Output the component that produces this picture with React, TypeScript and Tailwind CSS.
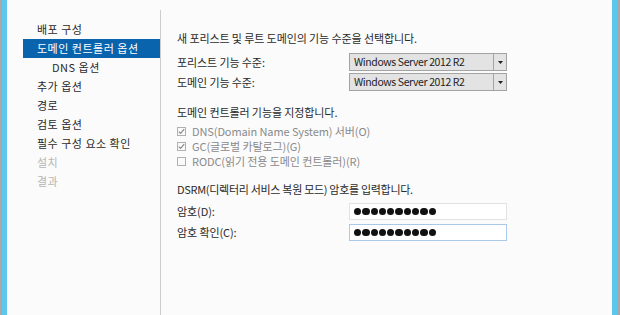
const navItems = [
  { label: "배포 구성" },
  { label: "도메인 컨트롤러 옵션", selected: true },
  { label: "DNS 옵션", sub: true },
  { label: "추가 옵션" },
  { label: "경로" },
  { label: "검토 옵션" },
  { label: "필수 구성 요소 확인" },
  { label: "설치", disabled: true },
  { label: "결과", disabled: true },
];

function Select({ value }: { value: string }) {
  return (
    <div className="w-[158px] h-[18px] flex bg-[#e3e3e3] border border-[#a3a3a3]">
      <div className="flex-1 flex items-center pl-[4px] text-[10.5px] tracking-[-0.4px] text-[#1e1e1e]">{value}</div>
      <div className="w-[13px] border-l border-[#a3a3a3] flex items-center justify-center">
        <svg width="5" height="3" viewBox="0 0 5 3">
          <path d="M0 0h5L2.5 3z" fill="#222" />
        </svg>
      </div>
    </div>
  );
}

function Password({ focused }: { focused?: boolean }) {
  return (
    <div
      className={
        "w-[158px] h-[17px] flex items-center gap-[1px] pl-[4px] bg-white border " +
        (focused ? "border-[#a9c9e8]" : "border-[#e2e2e2]")
      }
    >
      {Array.from({ length: 10 }).map((_, i) => (
        <span key={i} className="w-[7.3px] h-[7.3px] rounded-full bg-[#111]" />
      ))}
    </div>
  );
}

function Check({ label, checked }: { label: string; checked?: boolean }) {
  return (
    <div className="h-[15px] flex items-center gap-[6px] text-[#8a8a8a]">
      <div className="w-[9px] h-[9px] border border-[#b0b0b0] bg-[#fafafa] flex items-center justify-center">
        {checked && (
          <svg width="7" height="7" viewBox="0 0 7 7">
            <path d="M0.8 3.6l1.8 1.8L6.2 1.2" fill="none" stroke="#8a8a8a" strokeWidth="1.2" />
          </svg>
        )}
      </div>
      <span>{label}</span>
    </div>
  );
}

export default function App() {
  return (
    <div
      className="w-[620px] h-[315px] flex bg-[#fbfbfb] overflow-hidden text-[11px] tracking-[-0.1px] text-[#2a2a2a]"
      style={{ fontFamily: '"Noto Sans CJK KR", "Noto Sans", sans-serif' }}
    >
      <div className="w-[2px] bg-[#a8a8a8]" />
      <div className="w-[5px] bg-[#5cc6ee]" />

      <div className="w-[154px] shrink-0 pt-[10px]">
        <div className="h-full border-r border-[#cdcdcd] pt-[10px] pl-[16px]">
          {navItems.map((it) => (
            <div
              key={it.label}
              className={
                "h-[19px] flex items-center tracking-[0.5px] " +
                (it.sub ? "pl-[29px] " : "pl-[14px] ") +
                (it.selected ? "bg-[#0a64ad] text-white" : it.disabled ? "text-[#b5b5b5]" : "text-[#2a2a2a]")
              }
            >
              {it.label}
            </div>
          ))}
        </div>
      </div>

      <div className="flex-1 pl-[16px] pt-[30px] flex flex-col">
        <div className="h-[16px] flex items-center">새 포리스트 및 루트 도메인의 기능 수준을 선택합니다.</div>
        <div className="mt-[7px] flex items-center">
          <div className="w-[172px] shrink-0">포리스트 기능 수준:</div>
          <Select value="Windows Server 2012 R2" />
        </div>
        <div className="mt-[2px] flex items-center">
          <div className="w-[172px] shrink-0">도메인 기능 수준:</div>
          <Select value="Windows Server 2012 R2" />
        </div>

        <div className="mt-[13px] h-[16px] flex items-center">도메인 컨트롤러 기능을 지정합니다.</div>
        <div className="mt-[4px]">
          <Check label="DNS(Domain Name System) 서버(O)" checked />
          <Check label="GC(글로벌 카탈로그)(G)" checked />
          <Check label="RODC(읽기 전용 도메인 컨트롤러)(R)" />
        </div>

        <div className="mt-[12px] h-[16px] flex items-center tracking-[-0.3px]">DSRM(디렉터리 서비스 복원 모드) 암호를 입력합니다.</div>
        <div className="mt-[6px] flex items-center">
          <div className="w-[172px] shrink-0">암호(D):</div>
          <Password />
        </div>
        <div className="mt-[4px] flex items-center">
          <div className="w-[172px] shrink-0">암호 확인(C):</div>
          <Password focused />
        </div>
      </div>

      <div className="w-[5px] bg-[#5cc6ee]" />
      <div className="w-[3px] bg-[#a8a8a8]" />
    </div>
  );
}
